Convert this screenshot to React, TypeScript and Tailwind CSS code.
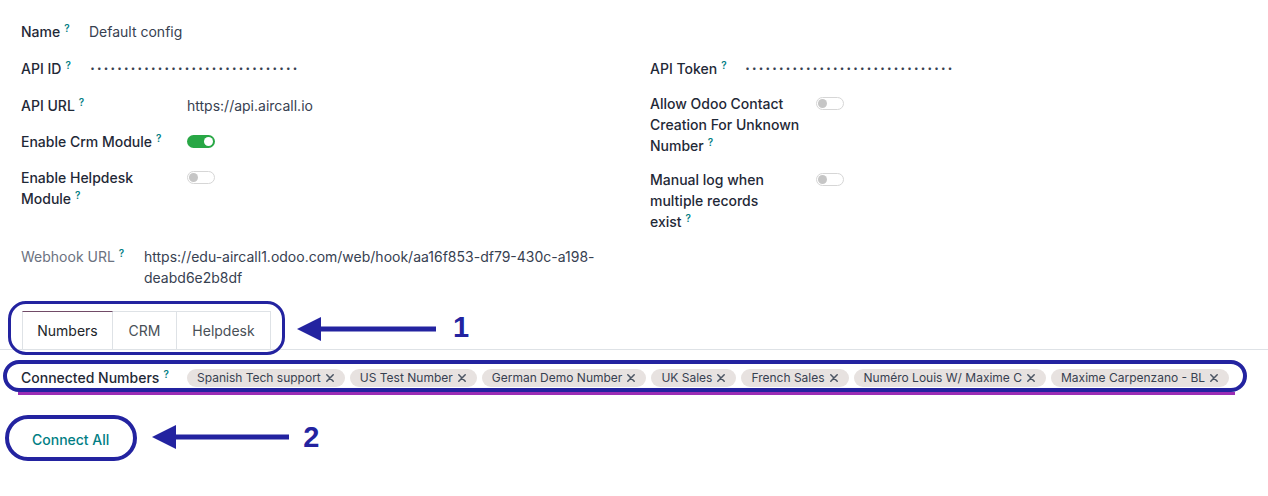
import React from "react";

function Q() {
  return (
    <sup className="ml-[4px] top-[-0.55em] text-[10px] font-semibold text-[#017e84]">?</sup>
  );
}

function Toggle({ on }: { on?: boolean }) {
  if (on) {
    return (
      <span className="mt-[4px] inline-flex h-[13px] w-[28px] shrink-0 items-center justify-end rounded-full bg-[#28a745] px-[2px]">
        <span className="h-[9px] w-[9px] rounded-full bg-white" />
      </span>
    );
  }
  return (
    <span className="mt-[4px] inline-flex h-[13px] w-[28px] shrink-0 items-center rounded-full border border-[#d6d6d6] bg-white px-[1px]">
      <span className="h-[9px] w-[9px] rounded-full bg-[#c6c6c6]" />
    </span>
  );
}

function Dots() {
  return (
    <span className="flex text-[#374151]">
      {Array.from({ length: 31 }).map((_, i) => (
        <span key={i} className="w-[6.75px] text-center text-[8px] leading-[21px]">
          •
        </span>
      ))}
    </span>
  );
}

function Label({ children, w }: { children: React.ReactNode; w: string }) {
  return <div className={`${w} shrink-0 font-medium text-[#1f2937]`}>{children}</div>;
}

function Arrow({ width }: { width: number }) {
  return (
    <svg width={width} height={26} viewBox={`0 0 ${width} 26`} className="shrink-0">
      <polygon points="0,13 24,1 24,25" fill="#2323a0" />
      <rect x={22} y={10.5} width={width - 22} height={5} fill="#2323a0" />
    </svg>
  );
}

function Tag({ text }: { text: string }) {
  return (
    <span className="flex h-[18px] items-center rounded-full bg-[#e7e2e0] pl-[10px] pr-[11px] text-[12px] text-[#374151]">
      <span className="whitespace-nowrap">{text}</span>
      <svg width="8" height="8" viewBox="0 0 8 8" className="ml-[5px]">
        <path d="M0.8 0.8L7.2 7.2M7.2 0.8L0.8 7.2" stroke="#4b5563" strokeWidth="1.5" strokeLinecap="round" />
      </svg>
    </span>
  );
}

export default function App() {
  const tags = [
    "Spanish Tech support",
    "US Test Number",
    "German Demo Number",
    "UK Sales",
    "French Sales",
    "Numéro Louis W/ Maxime C",
    "Maxime Carpenzano - BL",
  ];
  return (
    <div className="min-h-[496px] w-[1268px] overflow-hidden bg-white font-['Inter',sans-serif] text-[14px] leading-[21px] text-[#374151]">
      <div className="pl-[21px] pt-[21px]">
        <div className="flex">
          <Label w="w-[68px]">
            Name
            <Q />
          </Label>
          <span>Default config</span>
        </div>

        <div className="mt-[16px] grid grid-cols-[629px_1fr]">
          <div className="flex flex-col gap-[15px]">
            <div className="flex">
              <Label w="w-[68px]">
                API ID
                <Q />
              </Label>
              <Dots />
            </div>
            <div className="flex h-[22px] pt-[1px]">
              <Label w="w-[166px]">
                API URL
                <Q />
              </Label>
              <span>https://api.aircall.io</span>
            </div>
            <div className="flex">
              <Label w="w-[166px]">
                Enable Crm Module
                <Q />
              </Label>
              <Toggle on />
            </div>
            <div className="flex">
              <Label w="w-[166px]">
                <div className="w-[152px]">
                  Enable Helpdesk Module
                  <Q />
                </div>
              </Label>
              <Toggle />
            </div>
          </div>

          <div className="flex flex-col gap-[13px]">
            <div className="flex">
              <Label w="w-[94px]">
                API Token
                <Q />
              </Label>
              <Dots />
            </div>
            <div className="flex pt-[1px]">
              <Label w="w-[166px]">
                <div className="w-[152px]">
                  Allow Odoo Contact Creation For Unknown Number
                  <Q />
                </div>
              </Label>
              <Toggle />
            </div>
            <div className="flex pb-[1px]">
              <Label w="w-[166px]">
                <div className="w-[152px]">
                  Manual log when multiple records exist
                  <Q />
                </div>
              </Label>
              <Toggle />
            </div>
          </div>
        </div>

        <div className="mt-[13px] flex">
          <div className="w-[123px] shrink-0 text-[#6b7280]">
            Webhook URL
            <Q />
          </div>
          <div className="w-[460px] text-[#374151]">
            https://edu-aircall1.odoo.com/web/hook/aa16f853-df79-430c-a198-deabd6e2b8df
          </div>
        </div>
      </div>

      {/* Tabs */}
      <div className="mt-[23px] flex items-start border-b border-[#dee2e6] pl-[22px]">
        <div className="relative flex">
          <div className="flex h-[38px] w-[91px] items-center justify-center border border-b-0 border-[#dee2e6] border-t-[#714b67] text-[#212529]">
            Numbers
          </div>
          <div className="flex h-[38px] w-[64px] items-center justify-center border-r border-t border-[#dee2e6] text-[#495057]">
            CRM
          </div>
          <div className="flex h-[38px] w-[94px] items-center justify-center border-r border-t border-[#dee2e6] text-[#495057]">
            Helpdesk
          </div>
          <div className="pointer-events-none absolute bottom-[-6px] left-[-14px] right-[-14px] top-[-10px] rounded-[18px] border-[3px] border-[#2323a0]" />
        </div>
        <div className="ml-[26px] mt-[5px]">
          <Arrow width={139} />
        </div>
        <div className="ml-[17px] mt-[2px] font-['Liberation_Sans',Arial,sans-serif] text-[29px] font-bold leading-[29px] text-[#2323a0]">
          1
        </div>
      </div>

      {/* Connected numbers */}
      <div className="relative mt-[17px] flex pl-[21px]">
        <div className="pointer-events-none absolute left-[18px] top-[25px] h-[3px] w-[1217px] bg-[#9b2db5]" />
        <div className="pointer-events-none absolute bottom-[-4px] left-[3px] right-[21px] top-[-7px] rounded-full border-[4px] border-[#2323a0]" />
        <div className="relative w-[166px] shrink-0 font-medium text-[#1f2937]">
          Connected Numbers
          <Q />
        </div>
        <div className="relative flex items-center gap-[5px]">
          {tags.map((t) => (
            <Tag key={t} text={t} />
          ))}
        </div>
      </div>

      {/* Connect All */}
      <div className="mt-[36px] flex items-start pl-[16px]">
        <div className="relative">
          <button className="flex h-[30px] items-center px-[16px] font-medium text-[#017e84]">
            Connect All
          </button>
          <div className="pointer-events-none absolute bottom-[-7px] left-[-11px] right-[-12px] top-[-9px] rounded-full border-[4px] border-[#2323a0]" />
        </div>
        <div className="ml-[27px]">
          <Arrow width={137} />
        </div>
        <div className="ml-[14px] mt-[-1px] font-['Liberation_Sans',Arial,sans-serif] text-[29px] font-bold leading-[29px] text-[#2323a0]">
          2
        </div>
      </div>
    </div>
  );
}
